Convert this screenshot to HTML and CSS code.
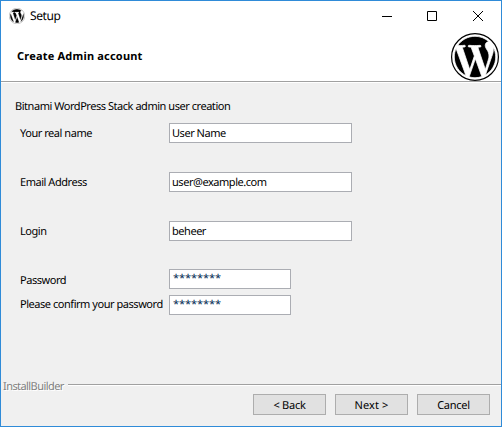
FILE: index.html
```html
<!DOCTYPE html>
<html lang="en">
<head>
<meta charset="utf-8">
<title>Setup</title>
<link rel="stylesheet" href="styles.css">
</head>
<body>
<svg class="defs" aria-hidden="true">
  <symbol id="wp" viewBox="0 0 24 24">
    <circle class="ring" cx="12" cy="12" r="11.7"/>
    <path class="mark" transform="translate(12 12) scale(.96) translate(-12 -12)" d="M21.469 6.825c.84 1.537 1.318 3.3 1.318 5.175 0 3.979-2.156 7.456-5.363 9.325l3.295-9.527c.615-1.54.82-2.771.82-3.864 0-.405-.026-.78-.07-1.11m-7.981.105c.647-.03 1.232-.105 1.232-.105.582-.075.514-.93-.067-.899 0 0-1.755.135-2.88.135-1.064 0-2.85-.15-2.85-.15-.585-.03-.661.855-.075.885 0 0 .54.061 1.125.09l1.68 4.605-2.37 7.08L5.354 6.9c.649-.03 1.234-.1 1.234-.1.585-.075.516-.93-.065-.896 0 0-1.746.138-2.874.138-.2 0-.438-.008-.69-.015C4.911 3.15 8.235 1.215 12 1.215c2.809 0 5.365 1.072 7.286 2.833-.046-.003-.091-.009-.141-.009-1.06 0-1.812.923-1.812 1.914 0 .89.513 1.643 1.06 2.531.411.72.89 1.643.89 2.977 0 .915-.354 1.994-.821 3.479l-1.075 3.585-3.9-11.61.001.014zM12 22.784c-1.059 0-2.081-.153-3.048-.437l3.237-9.406 3.315 9.087c.024.053.05.101.078.149-1.12.393-2.325.609-3.582.609M1.211 12c0-1.564.336-3.05.935-4.39L7.29 21.709C3.694 19.96 1.212 16.271 1.211 12z"/>
  </symbol>
</svg>
<div class="window">
  <header class="header">
    <div class="titlebar">
      <svg class="app-icon"><use href="#wp"/></svg>
      <span class="title">Setup</span>
      <div class="controls">
        <svg viewBox="0 0 10 10"><path d="M0 5.5h10"/></svg>
        <svg viewBox="0 0 10 10"><path d="M.5.5h9v9h-9z"/></svg>
        <svg viewBox="0 0 10 10"><path d="M0 0l10 10M10 0L0 10"/></svg>
      </div>
    </div>
    <div class="banner">
      <h1>Create Admin account</h1>
      <svg class="logo"><use href="#wp"/></svg>
    </div>
  </header>
  <main class="content">
    <p class="intro">Bitnami WordPress Stack admin user creation</p>
    <div class="row"><span class="label">Your real name</span><span class="field">User Name</span></div>
    <div class="row"><span class="label">Email Address</span><span class="field">user@example.com</span></div>
    <div class="row login"><span class="label">Login</span><span class="field">beheer</span></div>
    <div class="row password"><span class="label">Password</span><span class="field short">********</span></div>
    <div class="row confirm"><span class="label">Please confirm your password</span><span class="field short">********</span></div>
  </main>
  <footer>
    <div class="divider"><span class="brand">InstallBuilder</span><span class="rule"></span></div>
    <div class="buttons">
      <span class="button">&lt; Back</span>
      <span class="button next">Next &gt;</span>
      <span class="button">Cancel</span>
    </div>
  </footer>
</div>
</body>
</html>
```
FILE: styles.css
```css
* { box-sizing: border-box; }
body { margin: 0; font: 11px/20px "Noto Sans", sans-serif; color: #000; text-rendering: geometricPrecision; }
.defs { position: absolute; width: 0; height: 0; }
.ring { fill: #fff; stroke: var(--ring, #000); stroke-width: .6; }
.mark { stroke: #fff; stroke-width: .4; }
.window {
  width: 502px; height: 427px;
  border: 1px solid #2f8bd8;
  background: #f0f0f0;
  display: flex; flex-direction: column;
  white-space: nowrap;
}
.header {
  height: 82px; background: #fff;
  border-bottom: 1px solid #fff;
  box-shadow: inset 0 -1px #a0a0a0;
}
.titlebar { height: 29px; display: flex; align-items: center; padding-left: 8px; }
.app-icon { width: 16px; height: 16px; --ring: #777; }
.title { font-size: 12px; margin-left: 5px; letter-spacing: -.4px; }
.controls { margin: 0 18px 0 auto; display: flex; gap: 36px; }
.controls svg { width: 10px; height: 10px; fill: none; stroke: #000; overflow: visible; }
.controls svg:first-child { margin-right: -1px; }
.banner { display: flex; justify-content: space-between; padding: 3px 2px 0 16px; }
h1 { margin: 14px 0 0; font-size: 11px; line-height: 20px; font-weight: 700; letter-spacing: .2px; }
.logo { width: 48px; height: 48px; }
.content { flex: 1; padding: 14px 0 0 14px; letter-spacing: -.46px; }
.intro { margin: 0 0 6px; height: 20px; line-height: 19px; }
.row { display: flex; height: 20px; margin-bottom: 29px; padding-left: 5px; }
.row.login { margin-bottom: 28px; }
.row.password { margin-bottom: 6px; }
.label { width: 149px; line-height: 22px; }
.password .label { line-height: 24px; }
.confirm .label { line-height: 20px; }
.field {
  width: 183px; height: 20px;
  border: 1px solid #abadb3; background: #fff;
  padding-left: 2px; line-height: 20px;
}
.short { width: 122px; padding-left: 3px; line-height: 18px; letter-spacing: -.05px; color: #002850; }
footer { height: 51px; }
.divider { display: flex; height: 19px; padding-left: 2px; line-height: 23px; }
.brand { width: 65px; color: #808080; text-shadow: 1px 1px #fff; letter-spacing: -.57px; }
.rule { flex: 1; height: 2px; margin-top: 9px; background: #fff; border-top: 1px solid #a0a0a0; }
.buttons { display: flex; justify-content: flex-end; gap: 9px; padding-right: 11px; }
.button {
  width: 73px; height: 21px; text-align: center; line-height: 21px;
  background: #e1e1e1; border: 1px solid #adadad; letter-spacing: -.25px;
}
.next { letter-spacing: .1px; }
```
